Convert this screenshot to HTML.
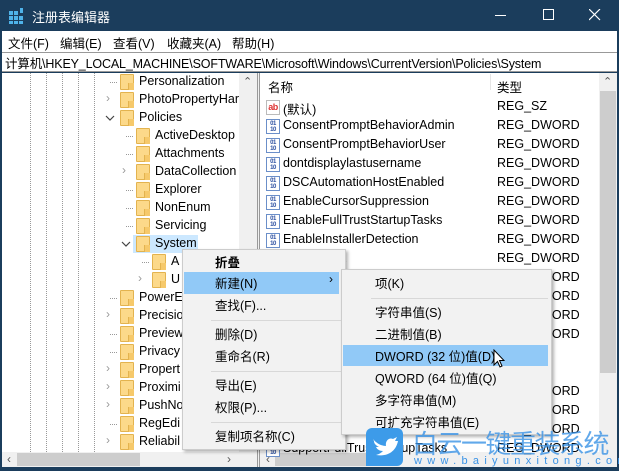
<!DOCTYPE html>
<html><head><meta charset="utf-8"><style>
*{margin:0;padding:0;box-sizing:border-box}
body{width:619px;height:471px;overflow:hidden;background:#1b3d5c;font-family:"Liberation Sans","Noto Sans CJK SC",sans-serif;font-size:12.5px;color:#000;position:relative}
.a{position:absolute;white-space:nowrap}
.t{line-height:18px}
.fold{position:absolute;width:14px;height:16px;background:#fcd98a;border:1px solid #e3b34f;border-radius:1px}
.fold:after{content:"";position:absolute;right:-1px;bottom:-1px;width:5px;height:7px;background:#f6c96b;border-left:1px solid #e3b34f}
.dv{position:absolute;width:0;border-left:1px dotted #999}
.dh{position:absolute;height:0;border-top:1px dotted #999}
.arr{position:absolute;color:#9a9a9a;font-size:12px}
.ic{position:absolute;width:14px;height:15px;border:1px solid #6b8fc9;background:#fff;font-size:6px;line-height:6px;color:#2b4fa0;font-weight:bold;text-align:center;letter-spacing:-0.5px;padding-top:1px}
.sep{position:absolute;height:1px;background:#d8d8d8}
</style></head><body>
<div class="a" style="left:9px;top:8px;width:16px;height:16px">
<svg width="16" height="16"><g fill="#4fb3ea"><rect x="0" y="3" width="4" height="4"/><rect x="5" y="3" width="4" height="4"/><rect x="0" y="8" width="4" height="4"/><rect x="5" y="8" width="4" height="4"/><rect x="10" y="8" width="4" height="4"/><rect x="0" y="13" width="4" height="3"/><rect x="5" y="13" width="4" height="3"/><rect x="10" y="13" width="4" height="3"/><rect x="11" y="0" width="3" height="5"/></g></svg></div>
<div class="a" style="left:32px;top:7px;color:#fff;font-size:13px">注册表编辑器</div>
<div class="a" style="left:495px;top:15px;width:11px;height:1px;background:#fff"></div>
<div class="a" style="left:543px;top:9px;width:11px;height:11px;border:1px solid #fff"></div>
<svg class="a" style="left:589px;top:9px" width="12" height="12"><path d="M0 0L11 11M11 0L0 11" stroke="#fff" stroke-width="1.2"/></svg>
<div class="a" style="left:2px;top:31px;width:615px;height:21px;background:#fff"></div>
<div class="a" style="left:8px;top:33px">文件(F)</div>
<div class="a" style="left:60px;top:33px">编辑(E)</div>
<div class="a" style="left:113px;top:33px">查看(V)</div>
<div class="a" style="left:167px;top:33px">收藏夹(A)</div>
<div class="a" style="left:232px;top:33px">帮助(H)</div>
<div class="a" style="left:2px;top:52px;width:615px;height:20px;background:#fff;border-top:1px solid #999;border-bottom:1px solid #999"></div>
<div class="a" style="left:5px;top:53px;letter-spacing:-0.15px">计算机\HKEY_LOCAL_MACHINE\SOFTWARE\Microsoft\Windows\CurrentVersion\Policies\System</div>
<div class="a" style="left:2px;top:73px;width:255px;height:394px;background:#fff"></div>
<div class="a" style="left:257px;top:73px;width:3px;height:394px;background:#f0f0f0;border-left:1px solid #999;border-right:1px solid #999"></div>
<div class="a" style="left:239px;top:73px;width:18px;height:379px;background:#f0f0f0"></div>
<div class="a" style="left:243px;top:75px;color:#555;font-size:11px">⌃</div>
<div class="dv" style="left:30px;top:73px;height:379px"></div>
<div class="dv" style="left:46px;top:73px;height:379px"></div>
<div class="dv" style="left:62px;top:73px;height:379px"></div>
<div class="dv" style="left:78px;top:73px;height:379px"></div>
<div class="dv" style="left:94px;top:73px;height:379px"></div>
<div class="a" style="left:133px;top:235px;width:65px;height:18px;background:#cce8ff"></div>
<div id="tree"></div>
<div class="a" style="left:2px;top:452px;width:237px;height:15px;background:#f0f0f0"></div>
<div class="a" style="left:17px;top:453px;width:123px;height:13px;background:#cdcdcd"></div>
<div class="a" style="left:7px;top:452px;color:#555;font-size:12px">‹</div>
<div class="a" style="left:227px;top:452px;color:#555;font-size:12px">›</div>
<div class="a" style="left:239px;top:452px;width:18px;height:15px;background:#f0f0f0"></div>
<div class="a" style="left:260px;top:73px;width:357px;height:394px;background:#fff"></div>
<div class="a" style="left:490px;top:74px;width:1px;height:16px;background:#e5e5e5"></div>
<div class="a" style="left:268px;top:77px">名称</div>
<div class="a" style="left:497px;top:77px">类型</div>
<div class="a" style="left:599px;top:73px;width:18px;height:379px;background:#f0f0f0"></div>
<div class="a" style="left:600px;top:91px;width:16px;height:282px;background:#cdcdcd"></div>
<div class="a" style="left:603px;top:75px;color:#555;font-size:11px">⌃</div>
<div class="a" style="left:260px;top:452px;width:357px;height:15px;background:#f0f0f0"></div>
<div class="a" style="left:275px;top:453px;width:120px;height:13px;background:#cdcdcd"></div>
<div class="a" style="left:266px;top:452px;color:#555;font-size:12px">‹</div>
<div id="rows"></div>
<div class="a" style="left:182px;top:249px;width:164px;height:201px;background:#f2f2f2;border:1px solid #ccc;box-shadow:2px 2px 3px rgba(0,0,0,.3)"></div>
<div class="a" style="left:184px;top:272px;width:155px;height:22px;background:#91c9f7"></div>
<div class="a" style="left:215px;top:252px;font-weight:bold">折叠</div>
<div class="a" style="left:215px;top:273px">新建(N)</div>
<div class="a" style="left:329px;top:272px;font-size:12px">›</div>
<div class="a" style="left:215px;top:295px">查找(F)...</div>
<div class="sep" style="left:211px;top:320px;width:130px"></div>
<div class="a" style="left:215px;top:324px">删除(D)</div>
<div class="a" style="left:215px;top:346px">重命名(R)</div>
<div class="sep" style="left:211px;top:371px;width:130px"></div>
<div class="a" style="left:215px;top:375px">导出(E)</div>
<div class="a" style="left:215px;top:397px">权限(P)...</div>
<div class="sep" style="left:211px;top:422px;width:130px"></div>
<div class="a" style="left:215px;top:426px">复制项名称(C)</div>
<div class="a" style="left:341px;top:269px;width:211px;height:166px;background:#f2f2f2;border:1px solid #ccc;box-shadow:2px 2px 3px rgba(0,0,0,.3)"></div>
<div class="a" style="left:343px;top:345px;width:205px;height:21px;background:#91c9f7"></div>
<div class="a" style="left:375px;top:273px">项(K)</div>
<div class="sep" style="left:371px;top:298px;width:177px"></div>
<div class="a" style="left:375px;top:302px">字符串值(S)</div>
<div class="a" style="left:375px;top:324px">二进制值(B)</div>
<div class="a" style="left:375px;top:346px">DWORD (32 位)值(D)</div>
<div class="a" style="left:375px;top:368px">QWORD (64 位)值(Q)</div>
<div class="a" style="left:375px;top:390px">多字符串值(M)</div>
<div class="a" style="left:375px;top:412px">可扩充字符串值(E)</div>
<svg class="a" style="left:493px;top:349px" width="12" height="20"><path d="M1 1L1 16L4.5 12.5L7 18L9 17L6.5 11.5L11 11.5Z" fill="#fff" stroke="#000" stroke-width="1"/></svg>
<div class="a" style="left:366px;top:428px;width:37px;height:38px;background:#3d9be9;border-radius:6px 6px 6px 0"></div>
<svg class="a" style="left:370px;top:433px" width="30" height="26"><path d="M3 6C7 11 12 13 16 13C15 8 19 4 23 6L27 4L25 8L28 8C26 18 18 24 6 22C10 21 12 19 13 18C9 18 7 16 6 14C8 14 9 14 9 14C5 12 4 10 4 8Z" fill="#fff"/></svg>
<div class="a" style="left:412px;top:424px;font-size:26px;color:#3a93e6;letter-spacing:-1.5px;opacity:.8">白云一键重装系统</div>
<div class="a" style="left:414px;top:455px;font-size:11px;color:#3a93e6;letter-spacing:5.3px;line-height:12px">www.baiyunxitong.com</div>
<script>
var t=[[82,1,'Personalization',''],[100,1,'PhotoPropertyHar','>'],[118,1,'Policies','v'],[136,2,'ActiveDesktop',''],[154,2,'Attachments',''],[172,2,'DataCollection','>'],[190,2,'Explorer',''],[208,2,'NonEnum',''],[226,2,'Servicing',''],[244,2,'System','v'],[262,3,'A',''],[280,3,'U','>'],[298,1,'PowerE',''],[316,1,'Precisio','>'],[334,1,'Preview',''],[352,1,'Privacy',''],[370,1,'Propert','>'],[388,1,'Proximi','>'],[406,1,'PushNo','>'],[424,1,'RegEdi',''],[442,1,'Reliabil','>']];
var h='';t.forEach(function(r){var fx=104+16*r[1],y=r[0];
if(r[3]=='>')h+='<div class="arr" style="left:'+(fx-14)+'px;top:'+(y-9)+'px">›</div>';
else if(r[3]=='v')h+='<svg class="a" style="left:'+(fx-15)+'px;top:'+(y-3)+'px" width="10" height="6"><path d="M1 1L5 5L9 1" fill="none" stroke="#444" stroke-width="1.2"/></svg>';
else h+='<div class="dh" style="left:'+(fx-10)+'px;top:'+y+'px;width:7px"></div>';
h+='<div class="fold" style="left:'+fx+'px;top:'+(y-8)+'px"></div><div class="a t" style="left:'+(fx+19)+'px;top:'+(y-10)+'px">'+r[2]+'</div>';});
document.getElementById('tree').innerHTML=h;
var n=[['(默认)','REG_SZ'],['ConsentPromptBehaviorAdmin','REG_DWORD'],['ConsentPromptBehaviorUser','REG_DWORD'],['dontdisplaylastusername','REG_DWORD'],['DSCAutomationHostEnabled','REG_DWORD'],['EnableCursorSuppression','REG_DWORD'],['EnableFullTrustStartupTasks','REG_DWORD'],['EnableInstallerDetection','REG_DWORD'],['EnableLUA','REG_DWORD'],['EnableSecureUIAPaths','REG_DWORD'],['EnableUIADesktopToggle','REG_DWORD'],['EnableUwpStartupTasks','REG_DWORD'],['EnableVirtualization','REG_DWORD'],['legalnoticecaption','REG_SZ'],['legalnoticetext','REG_SZ'],['PromptOnSecureDesktop','REG_DWORD'],['scforceoption','REG_DWORD'],['shutdownwithoutlogon','REG_DWORD'],['SupportFullTrustStartupTasks','REG_DWORD']];
var s='';n.forEach(function(r,i){var y=108+19*i;
if(i==0)s+='<div class="ic" style="left:266px;top:'+(y-8)+'px;color:#d33;font-size:9px;line-height:11px;border-color:#bbb">ab</div>';
else s+='<div class="ic" style="left:266px;top:'+(y-8)+'px">01<br>10</div>';
s+='<div class="a" style="left:283px;top:'+(y-9)+'px">'+r[0]+'</div><div class="a" style="left:497px;top:'+(y-9)+'px">'+r[1]+'</div>';});
document.getElementById('rows').innerHTML=s;
</script>
</body></html>
